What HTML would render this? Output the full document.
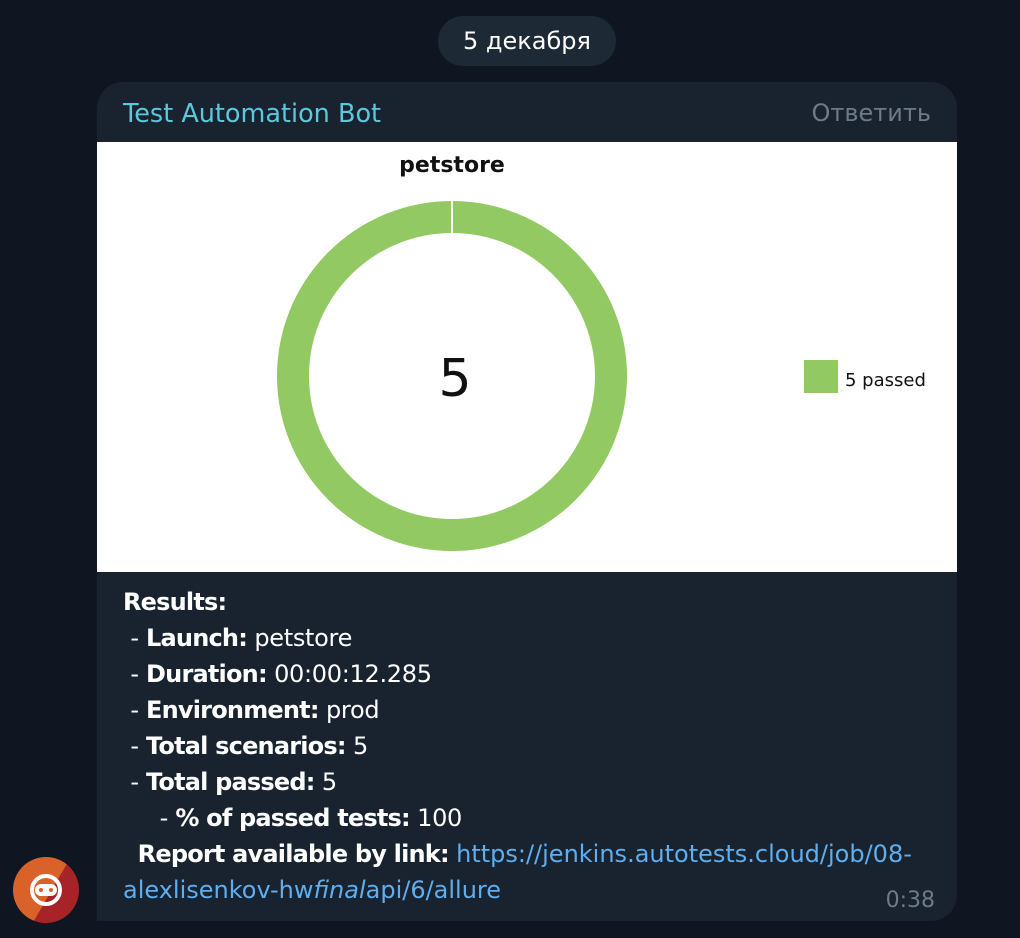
<!DOCTYPE html>
<html><head><meta charset="utf-8"><style>
body{margin:0;width:1020px;height:938px;background:#0f1621;font-family:"DejaVu Sans",sans-serif;position:relative;overflow:hidden}
.pill{position:absolute;left:438px;top:16px;width:178px;height:50px;border-radius:25px;background:#1d2935;color:#fff;font-size:24px;line-height:50px;text-align:center}
.bub{position:absolute;left:97px;top:82px;width:860px;height:839px;background:#19232f;border-radius:26px 26px 26px 0;overflow:hidden}
.name{position:absolute;left:26px;top:17px;color:#5bc8dc;font-size:25.5px}
.reply{position:absolute;right:26px;top:17px;color:#6d7b88;font-size:24px}
.img{position:absolute;left:0;top:60px;width:860px;height:430px;background:#fff}
.txt{position:absolute;left:26px;top:502px;color:#fff;font-size:24px;line-height:36px;white-space:pre;letter-spacing:-0.3px}
b{font-weight:bold;letter-spacing:-0.8px}
a{color:#5eaef0;text-decoration:none;letter-spacing:0}
.time{position:absolute;right:22px;bottom:8px;color:#6d7b88;font-size:22px}
.av{position:absolute;left:13px;top:857px;width:66px;height:66px;border-radius:50%;background:linear-gradient(120deg,#d9622a 55%,#a82328 56%)}
</style></head><body>
<div class="pill">5 декабря</div>
<div class="bub">
<div class="name">Test Automation Bot</div>
<div class="reply">Ответить</div>
<div class="img"><svg width="860" height="430">
<text x="355" y="30" text-anchor="middle" font-size="22" font-weight="bold" fill="#111" font-family="DejaVu Sans">petstore</text>
<circle cx="355" cy="234" r="159" fill="none" stroke="#93c963" stroke-width="32"/>
<line x1="355" y1="59" x2="355" y2="92" stroke="#fff" stroke-width="2"/>
<text x="358" y="254" text-anchor="middle" font-size="52" fill="#111" font-family="DejaVu Sans">5</text>
<rect x="707" y="218" width="34" height="33" fill="#93c963"/>
<text x="748" y="244" font-size="18" fill="#111" font-family="DejaVu Sans">5 passed</text>
</svg></div>
<div class="txt"><b>Results:</b>
 - <b>Launch:</b> petstore
 - <b>Duration:</b> 00:00:12.285
 - <b>Environment:</b> prod
 - <b>Total scenarios:</b> 5
 - <b>Total passed:</b> 5
     - <b>% of passed tests:</b> 100
  <b>Report available by link:</b> <a>https://jenkins.autotests.cloud/job/08-</a>
<a>alexlisenkov-hw<i>final</i>api/6/allure</a></div>
<div class="time">0:38</div>
</div>
<div class="av"><svg width="66" height="66"><circle cx="33" cy="33" r="14" fill="none" stroke="#fff" stroke-width="4"/><rect x="22" y="27" width="22" height="12" rx="6" fill="#fff"/><circle cx="28" cy="33" r="2" fill="#d9622a"/><circle cx="38" cy="33" r="2" fill="#d9622a"/></svg></div>
</body></html>
